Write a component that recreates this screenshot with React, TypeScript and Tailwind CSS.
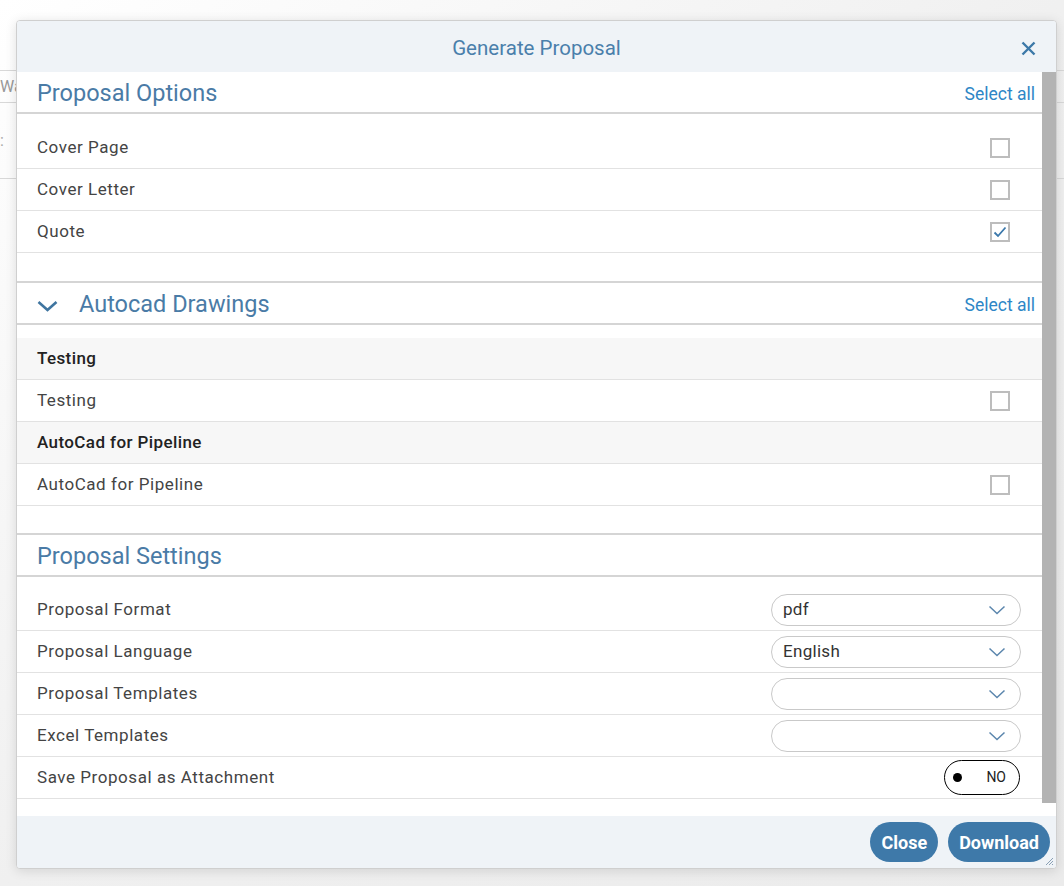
import { useState } from "react";

const font = { fontFamily: "Roboto, 'Noto Sans', Arial, sans-serif" };

function Checkbox({ checked }: { checked?: boolean }) {
  return (
    <span className="flex h-[20px] w-[20px] items-center justify-center border-2 border-[#bdbdbd] bg-white">
      {checked && (
        <svg width="14" height="12" viewBox="0 0 14 12" fill="none">
          <path d="M1.5 6.5 L5 10 L12.5 1.5" stroke="#3b78ab" strokeWidth="1.8" />
        </svg>
      )}
    </span>
  );
}

function Chevron({ className }: { className?: string }) {
  return (
    <svg className={className} width="18" height="10" viewBox="0 0 18 10" fill="none">
      <path d="M1.5 1.5 L9 8.5 L16.5 1.5" stroke="#5b86ad" strokeWidth="1.5" />
    </svg>
  );
}

function SelectBox({ value }: { value: string }) {
  return (
    <div className="flex h-[32px] w-[250px] items-center justify-between rounded-full border border-[#c9c9c9] bg-white pl-[11px] pr-[14px]">
      <span className="text-[17px] tracking-[0.3px] text-[#333]">{value}</span>
      <Chevron />
    </div>
  );
}

function SectionHeader({ title, selectAll, collapsible, first }: { title: string; selectAll?: boolean; collapsible?: boolean; first?: boolean }) {
  return (
    <div className={`flex items-center justify-between border-b-2 border-[#d5d5d5] pl-[20px] pr-[7px] pt-[4px] ${first ? "h-[42px]" : "h-[44px] border-t-2"}`}>
      <div className="flex items-center">
        {collapsible && (
          <svg className="mr-[21px] mt-[2px]" width="21" height="14" viewBox="0 0 21 14" fill="none">
            <path d="M1.5 3 L10.5 11 L19.5 3" stroke="#3f75a0" strokeWidth="2.6" />
          </svg>
        )}
        <span className="text-[23.5px] text-[#4a7ba6]">{title}</span>
      </div>
      {selectAll && <span className="text-[17.5px] text-[#2e86c6]">Select all</span>}
    </div>
  );
}

function Row({ label, children, group }: { label: string; children?: React.ReactNode; group?: boolean }) {
  return (
    <div className={`flex h-[42px] items-center justify-between border-b border-[#e2e2e2] pl-[20px] ${group ? "bg-[#f7f7f7]" : ""}`}>
      <span className={group ? "text-[17px] font-medium tracking-[0.4px] text-[#222]" : "text-[17px] tracking-[0.55px] text-[#444]"}>{label}</span>
      {children}
    </div>
  );
}

export default function App() {
  const [saveAttachment] = useState(false);

  return (
    <div className="relative h-[886px] w-[1064px] overflow-hidden bg-[#eeeeee] bg-gradient-to-br from-[#ffffff] via-[#f0f0f0] to-[#ebebeb]" style={font}>
      {/* page behind the dialog */}
      <div className="pt-[70px]">
        <div className="flex h-[33px] items-center border-y border-[#d8d8d8] text-[16px] text-[#999]">Wa</div>
        <div className="flex h-[75px] items-center text-[16px] text-[#aaa]">:</div>
        <div className="border-t border-[#d8d8d8]" />
      </div>

      {/* dialog */}
      <div className="absolute left-[16px] top-[20px] flex h-[849px] w-[1041px] flex-col overflow-hidden rounded-[4px] border border-[#cfcfcf] bg-white shadow-[0_2px_12px_rgba(0,0,0,0.12)]">
        <div className="relative flex h-[51px] shrink-0 items-center justify-center bg-[#eff3f7] pt-[3px]">
          <span className="text-[20.5px] text-[#4a7fab]">Generate Proposal</span>
          <svg className="absolute right-[20px] top-[20px]" width="15" height="15" viewBox="0 0 15 15" fill="none">
            <path d="M1.5 1.5 L13.5 13.5 M13.5 1.5 L1.5 13.5" stroke="#3c78a8" strokeWidth="2.4" />
          </svg>
        </div>

        <div className="flex min-h-0 flex-1">
          <div className="flex-1">
            <SectionHeader title="Proposal Options" selectAll first />
            <div className="pb-[28px] pt-[13px]">
              <Row label="Cover Page"><span className="mr-[32px]"><Checkbox /></span></Row>
              <Row label="Cover Letter"><span className="mr-[32px]"><Checkbox /></span></Row>
              <Row label="Quote"><span className="mr-[32px]"><Checkbox checked /></span></Row>
            </div>

            <SectionHeader title="Autocad Drawings" selectAll collapsible />
            <div className="pb-[27px] pt-[13px]">
              <Row label="Testing" group />
              <Row label="Testing"><span className="mr-[32px]"><Checkbox /></span></Row>
              <Row label="AutoCad for Pipeline" group />
              <Row label="AutoCad for Pipeline"><span className="mr-[32px]"><Checkbox /></span></Row>
            </div>

            <SectionHeader title="Proposal Settings" />
            <div className="pt-[12px]">
              <Row label="Proposal Format"><span className="mr-[21px]"><SelectBox value="pdf" /></span></Row>
              <Row label="Proposal Language"><span className="mr-[21px]"><SelectBox value="English" /></span></Row>
              <Row label="Proposal Templates"><span className="mr-[21px]"><SelectBox value="" /></span></Row>
              <Row label="Excel Templates"><span className="mr-[21px]"><SelectBox value="" /></span></Row>
              <Row label="Save Proposal as Attachment">
                <div className="mr-[22px] flex h-[35px] w-[76px] items-center justify-between rounded-full border-[1.5px] border-black bg-white pl-[8px] pr-[13px]">
                  <span className="h-[9px] w-[9px] rounded-full bg-black" />
                  <span className="text-[14px] text-[#222]">{saveAttachment ? "YES" : "NO"}</span>
                </div>
              </Row>
            </div>
          </div>
          <div className="flex w-[14px] flex-col">
            <div className="h-[731px] bg-[#b3b3b3]" />
          </div>
        </div>

        <div className="relative flex h-[52px] shrink-0 items-center justify-end gap-[10px] bg-[#eff3f7] pr-[6px]">
          <button className="h-[40px] rounded-full bg-[#3e79a9] px-[11px] text-[18px] font-bold text-white">Close</button>
          <button className="h-[40px] rounded-full bg-[#3e79a9] px-[11px] text-[18px] font-bold text-white">Download</button>
          <svg className="absolute bottom-[2px] right-[2px]" width="10" height="10" viewBox="0 0 10 10" fill="none">
            <path d="M9 2 L2 9 M9 5 L5 9 M9 8 L8 9" stroke="#8aa0b5" strokeWidth="1" />
          </svg>
        </div>
      </div>
    </div>
  );
}
